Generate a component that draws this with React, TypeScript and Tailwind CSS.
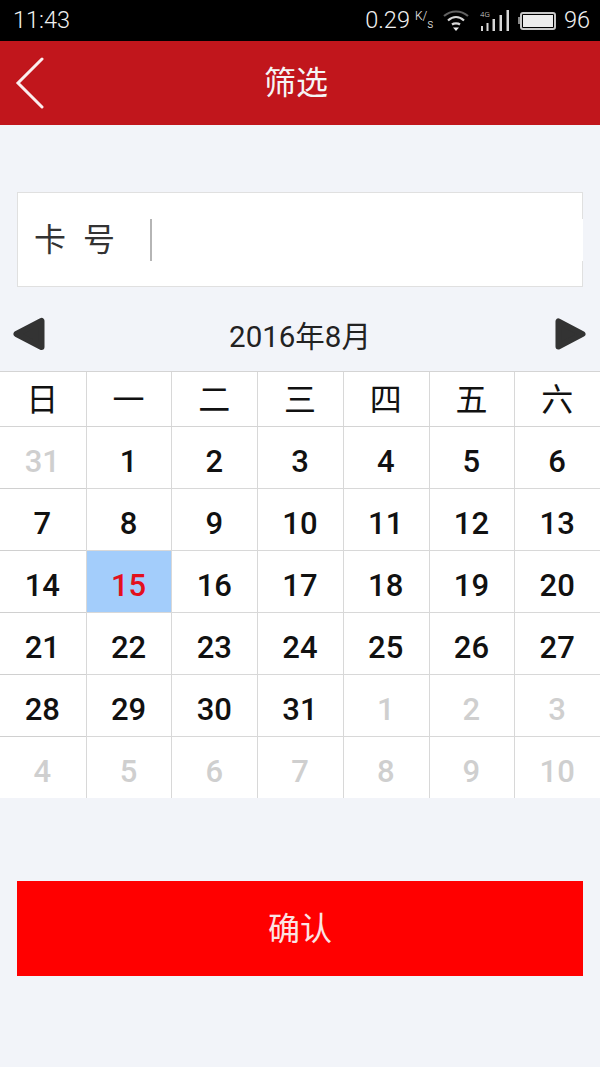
const FONT = "font-['Roboto','Noto_Sans_CJK_SC',sans-serif]";

const WEEK = ['日', '一', '二', '三', '四', '五', '六'];

// [day, muted]
const DAYS: [number, boolean][] = [
  [31, true],
  ...Array.from({ length: 31 }, (_, i): [number, boolean] => [i + 1, false]),
  ...Array.from({ length: 10 }, (_, i): [number, boolean] => [i + 1, true]),
];

function StatusBar() {
  return (
    <div className="flex h-[41px] items-center justify-between bg-black pl-[13px] pr-[10px] text-[23.5px] font-light text-[#f0f0f0]">
      <span>11:43</span>
      <div className="flex items-center">
        <span>0.29</span>
        <span className="ml-[5px] flex h-[22px] w-[17px] items-start text-[12px] leading-none">
          K<span className="font-light">/</span><span className="mt-[8px]">s</span>
        </span>
        <svg width="26" height="22" viewBox="0 0 26 22" className="ml-[11px]" fill="none" stroke="#d8d8d8" strokeWidth="2.2">
          <path d="M1 6 C8 0 18 0 25 6" opacity="0.45" />
          <path d="M5 10.5 C10 6 16 6 21 10.5" />
          <path d="M9 14.5 C11 13 15 13 17 14.5" />
          <path d="M10 17.5 H16 L13 21 Z" fill="#eeeeee" stroke="none" />
        </svg>
        <svg width="30" height="22" viewBox="0 0 30 22" className="ml-[11px]" fill="#d8d8d8">
          <text x="0" y="7" fontSize="8" fontFamily="Roboto">4G</text>
          <rect x="1" y="16" width="2" height="5" />
          <rect x="6.5" y="13" width="2" height="8" />
          <rect x="12.5" y="9" width="2.5" height="12" />
          <rect x="19.5" y="5" width="2.5" height="16" />
          <rect x="26.5" y="0" width="2.5" height="21" />
        </svg>
        <div className="ml-[8px] flex items-center">
          <div className="h-[7px] w-[2px] bg-[#888]" />
          <div className="h-[18px] w-[36px] rounded-[3px] border-2 border-[#c8c8c8] p-[1px]">
            <div className="h-full w-full bg-[#ececec]" />
          </div>
        </div>
        <span className="ml-[8px]">96</span>
      </div>
    </div>
  );
}

function Header() {
  return (
    <div className="relative flex h-[84px] items-center justify-center bg-[#c1161c] pr-[8px] text-[32px] text-[#f5f5f5]">
      <svg width="30" height="52" viewBox="0 0 30 52" className="absolute left-[15px] top-[16px]" fill="none" stroke="#fbeeee" strokeWidth="3" strokeLinecap="round">
        <path d="M27 2 L3 26 L27 50" />
      </svg>
      <span>筛选</span>
    </div>
  );
}

function CardField() {
  return (
    <div className="ml-[17px] mt-[67px] flex h-[95px] w-[566px] items-center border border-[#e0e0e0] bg-white">
      <span className="w-[132px] pl-[16px] text-[32px] leading-none tracking-[4.5px] text-[#333]">卡 号</span>
      <div className="h-[42px] w-[2px] bg-[#b5b5b5]" />
      <div className="-mr-px h-[42px] flex-1 bg-white" />
    </div>
  );
}

function MonthNav() {
  return (
    <div className="flex h-[84px] items-center justify-between pl-[13px] pr-[14px]">
      <svg width="32" height="34" viewBox="0 0 32 34" className="mt-[10px]" fill="#333" stroke="#333" strokeWidth="6" strokeLinejoin="round">
        <path d="M3.5 17 L28.5 4 V30 Z" />
      </svg>
      <span className="mt-[18px] text-[29.5px] leading-none text-[#222]">2016年8月</span>
      <svg width="31" height="34" viewBox="0 0 32 34" className="mt-[10px]" fill="#333" stroke="#333" strokeWidth="6" strokeLinejoin="round">
        <path d="M28.5 17 L3.5 4 V30 Z" />
      </svg>
    </div>
  );
}

function Calendar() {
  return (
    <div className="bg-white">
      <div className="grid h-[56px] grid-cols-7 border-y border-[#d4d4d4]">
        {WEEK.map((w, i) => (
          <div key={w} className={`flex items-center justify-center pr-[1px] pt-[2px] text-[32px] leading-none text-[#111] ${i > 0 ? 'border-l border-[#d8d8d8]' : ''}`}>
            {w}
          </div>
        ))}
      </div>
      <div className="grid grid-cols-7">
        {DAYS.map(([day, muted], i) => {
          const today = day === 15 && !muted;
          return (
            <div
              key={i}
              className={`flex items-center justify-center pr-[1px] pt-[8px] text-[31px] font-medium leading-none ${
                i % 7 ? 'border-l border-[#d8d8d8]' : ''
              } ${i < 35 ? 'h-[62px] border-b border-[#d0d0d0]' : 'h-[61px]'} ${
                today ? 'bg-[#a3cdfb] text-[#e3101c]' : muted ? 'text-[#cfcfcf]' : 'text-[#111]'
              }`}
            >
              {day}
            </div>
          );
        })}
      </div>
    </div>
  );
}

export default function App() {
  return (
    <div className={`h-[1067px] w-[600px] overflow-hidden bg-[#f2f4f9] ${FONT}`}>
      <StatusBar />
      <Header />
      <CardField />
      <MonthNav />
      <Calendar />
      <button className="ml-[17px] mt-[83px] flex h-[95px] w-[566px] items-center justify-center bg-[#ff0000] text-[32px] text-[#fbe3e3]">
        确认
      </button>
    </div>
  );
}
